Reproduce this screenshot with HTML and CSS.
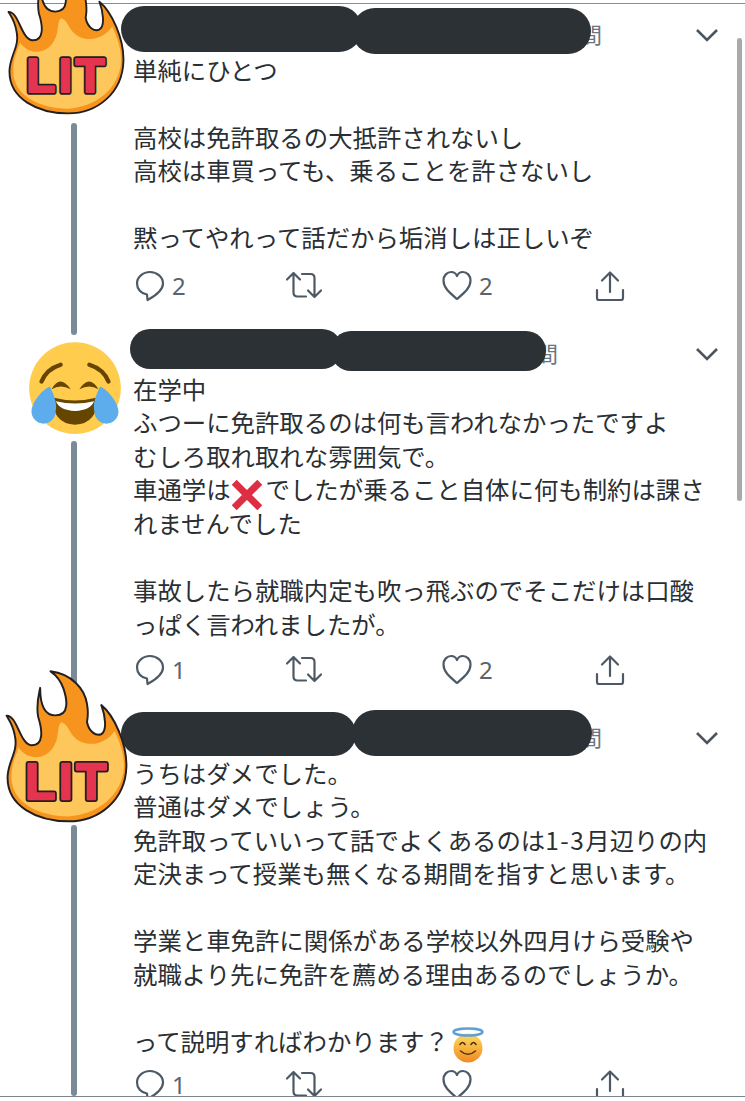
FILE: index.html
```html
<!DOCTYPE html>
<html lang="ja">
<head>
<meta charset="utf-8">
<title>Thread</title>
<link rel="stylesheet" href="styles.css">
</head>
<body>
<svg class="defs" width="0" height="0" aria-hidden="true">
  <defs>
    <symbol id="flame" viewBox="10 28 378 462" preserveAspectRatio="none">
      <path d="M150 32C215 40 255 85 262 130C268 165 262 180 262 185C268 215 290 228 305 222C325 212 318 165 306 134C345 165 385 250 383 320C380 420 300 485 205 485C110 485 15 440 18 350C20 300 52 275 40 225C35 195 22 178 15 166C48 165 55 250 90 255C130 258 125 210 112 170C105 135 113 105 118 82C118 130 130 165 165 165C210 165 200 115 190 85C182 62 165 42 150 32Z" fill="#f7941e" stroke="#231f20" stroke-width="6" stroke-linejoin="round"/>
      <path d="M52 262C80 305 150 305 170 235C175 205 175 190 183 186C208 192 205 225 240 243C280 262 325 245 347 212C365 250 378 290 375 325C370 405 295 466 205 470C115 470 30 430 30 352C30 310 42 290 52 262Z" fill="#fdc75b"/>
      <text class="lit-text lit-outline" x="72" y="418" textLength="250" lengthAdjust="spacing">LIT</text>
      <text class="lit-text lit-fill" x="72" y="418" textLength="250" lengthAdjust="spacing">LIT</text>
    </symbol>
    <symbol id="joy" viewBox="88 37 274 275">
      <circle cx="225" cy="175" r="137" fill="#ffcc4d"/>
      <path d="M125 155Q140 118 182 105M268 105Q310 118 325 155" fill="none" stroke="#664500" stroke-width="13" stroke-linecap="round"/>
      <path d="M155 178Q180 132 212 178Q182 162 155 178ZM238 178Q268 132 295 178Q268 162 238 178Z" fill="#664500"/>
      <path d="M158 203Q225 220 292 203Q292 282 225 284Q158 282 158 203Z" fill="#664500"/>
      <path d="M168 214Q225 228 282 214Q272 241 225 243Q178 241 168 214Z" fill="#fff"/>
      <path d="M150 170C165 200 172 225 167 245A36 36 0 0 1 95 245C95 220 125 180 150 170ZM300 170C285 200 278 225 283 245A36 36 0 0 0 355 245C355 220 325 180 300 170Z" fill="#5dadec"/>
    </symbol>
    <symbol id="i-comment" viewBox="0 0 30 32">
      <path d="M15 2C22 2 28 7 28 13.500C28 20 21 25.500 12.500 30L12 24.500C6 23.500 2 19 2 13.500C2 7 8 2 15 2Z"/>
    </symbol>
    <symbol id="i-retweet" viewBox="0 0 38 32">
      <path d="M2 9.500L8.500 3L15 9.500M8.500 3.500V22.500Q8.500 26.500 12.500 26.500H21M17 4H25.500Q29.500 4 29.500 8V27M23 20.500L29.500 27L36 20.500"/>
    </symbol>
    <symbol id="i-heart" viewBox="0 0 30 32">
      <path d="M15 29C8 23 1.500 18 1.500 10.500C1.500 5.500 5 2 9.200 2C12 2 14 3.500 15 6C16 3.500 18 2 20.800 2C25 2 28.500 5.500 28.500 10.500C28.500 18 22 23 15 29Z"/>
    </symbol>
    <symbol id="i-share" viewBox="0 0 30 32">
      <path d="M15 22V3M7 10.500L15 2.500L23 10.500M2 20V28Q2 30 4 30H26Q28 30 28 28V20"/>
    </symbol>
    <symbol id="i-chevron" viewBox="0 0 24 14">
      <path d="M2 2L12 12L22 2"/>
    </symbol>
  </defs>
</svg>

<main class="page">
  <div class="rule"></div>
  <div class="scrollbar"></div>

  <article class="tweet tweet-one">
    <div class="rail">
      <svg class="flame flame-one"><use href="#flame"/></svg>
      <div class="rail-slot rail-slot-one"></div>
      <div class="thread thread-overrun"></div>
    </div>
    <div class="body">
      <header class="head">
        <span class="pill pill-a1"></span><span class="pill pill-a2"></span>
        <span class="time time-long">1時間</span>
        <svg class="chevron"><use href="#i-chevron"/></svg>
      </header>
      <p class="text">単純にひとつ<br><br>高校は免許取るの大抵許されないし<br>高校は車買っても、乗ることを許さないし<br><br>黙ってやれって話だから垢消しは正しいぞ</p>
      <div class="actions actions-one">
        <div class="action"><svg class="icon"><use href="#i-comment"/></svg><span class="count">2</span></div>
        <div class="action"><svg class="icon icon-wide"><use href="#i-retweet"/></svg></div>
        <div class="action"><svg class="icon"><use href="#i-heart"/></svg><span class="count">2</span></div>
        <div class="action"><svg class="icon"><use href="#i-share"/></svg></div>
      </div>
    </div>
  </article>

  <article class="tweet tweet-two">
    <div class="rail">
      <svg class="joy"><use href="#joy"/></svg>
      <div class="thread"></div>
    </div>
    <div class="body">
      <header class="head">
        <span class="pill pill-b1"></span><span class="pill pill-b2"></span>
        <span class="time time-short">1時間</span>
        <svg class="chevron"><use href="#i-chevron"/></svg>
      </header>
      <p class="text">在学中<br>ふつーに免許取るのは何も言われなかったですよ<br>むしろ取れ取れな雰囲気で。<br>車通学は<svg class="cross" viewBox="0 0 30 30"><path d="M3 3L27 27M27 3L3 27"/></svg>でしたが乗ること自体に何も制約は課さ<br>れませんでした<br><br>事故したら就職内定も吹っ飛ぶのでそこだけは口酸<br>っぱく言われましたが。</p>
      <div class="actions actions-two">
        <div class="action"><svg class="icon"><use href="#i-comment"/></svg><span class="count">1</span></div>
        <div class="action"><svg class="icon icon-wide"><use href="#i-retweet"/></svg></div>
        <div class="action"><svg class="icon"><use href="#i-heart"/></svg><span class="count">2</span></div>
        <div class="action"><svg class="icon"><use href="#i-share"/></svg></div>
      </div>
    </div>
  </article>

  <article class="tweet tweet-three">
    <div class="rail">
      <svg class="flame flame-three"><use href="#flame"/></svg>
      <div class="rail-slot rail-slot-three"></div>
      <div class="thread"></div>
    </div>
    <div class="body">
      <header class="head">
        <span class="pill pill-c1"></span><span class="pill pill-c2"></span>
        <span class="time time-long">1時間</span>
        <svg class="chevron"><use href="#i-chevron"/></svg>
      </header>
      <p class="text">うちはダメでした。<br>普通はダメでしょう。<br>免許取っていいって話でよくあるのは<span class="digits">1-3</span>月辺りの内<br>定決まって授業も無くなる期間を指すと思います。<br><br>学業と車免許に関係がある学校以外四月けら受験や<br>就職より先に免許を薦める理由あるのでしょうか。<br><br>って説明すればわかります？<svg class="halo" viewBox="0 0 32 36">
        <defs><linearGradient id="halo-face" x1="0" y1="0" x2="0" y2="1"><stop offset="0" stop-color="#fddc5c"/><stop offset="1" stop-color="#f08a24"/></linearGradient></defs>
        <circle cx="16" cy="21" r="14.500" fill="url(#halo-face)"/>
        <ellipse cx="16" cy="5" rx="14.500" ry="3.500" fill="none" stroke="#5f9fd6" stroke-width="2.400"/>
        <path d="M8 17.500Q10.500 13.500 13 17.500M19 17.500Q21.500 13.500 24 17.500M8.500 24Q16 30.500 23.500 24" fill="none" stroke="#5b3410" stroke-width="1.600" stroke-linecap="round"/>
      </svg></p>
      <div class="actions actions-three">
        <div class="action"><svg class="icon"><use href="#i-comment"/></svg><span class="count">1</span></div>
        <div class="action"><svg class="icon icon-wide"><use href="#i-retweet"/></svg></div>
        <div class="action"><svg class="icon"><use href="#i-heart"/></svg></div>
        <div class="action"><svg class="icon"><use href="#i-share"/></svg></div>
      </div>
    </div>
  </article>

  <div class="page-foot"></div>
</main>
</body>
</html>
```

FILE: styles.css
```css
html, body {
  margin: 0;
  padding: 0;
  background: #fff;
}

.defs {
  position: absolute;
}

.page {
  position: relative;
  width: 745px;
  height: 1101px;
  overflow: hidden;
  background: #fff;
  font-family: "Noto Sans CJK JP", "Noto Sans", sans-serif;
  color: #2a2f34;
}

.rule {
  height: 1px;
  margin-top: 3px;
  background: #8c8c8c;
}

.scrollbar {
  position: absolute;
  top: 38px;
  left: 737px;
  width: 5px;
  height: 463px;
  border-radius: 3px;
  background: #a9a9a9;
}

.tweet {
  display: flex;
}

.tweet-one {
  height: 319px;
}

.tweet-two {
  height: 384px;
}

.tweet-three {
  height: 389px;
}

.rail {
  position: relative;
  flex: 0 0 133px;
  display: flex;
  flex-direction: column;
  align-items: flex-start;
}

.flame {
  position: absolute;
  z-index: 3;
  overflow: visible;
}

.flame-one {
  top: -36px;
  left: 7px;
  width: 118px;
  height: 147px;
}

.flame-three {
  top: -37px;
  left: 5px;
  width: 123px;
  height: 153px;
}

.lit-text {
  font-family: "Liberation Sans", sans-serif;
  font-weight: 700;
  font-size: 152px;
  stroke-linejoin: round;
}

.lit-outline {
  fill: #231f20;
  stroke: #231f20;
  stroke-width: 18px;
}

.lit-fill {
  fill: #e5344f;
  stroke: #e5344f;
  stroke-width: 7px;
}

.rail-slot-one {
  flex: 0 0 119px;
}

.rail-slot-three {
  flex: 0 0 118px;
}

.joy {
  flex: 0 0 92px;
  width: 92px;
  height: 92px;
  margin: 19px 0 7px 29px;
}

.thread {
  flex: 1;
  width: 6px;
  margin-left: 71px;
  border-radius: 3px;
  background: #7b8a98;
}

.thread-overrun {
  margin-bottom: -12px;
}

.body {
  flex: 1;
  min-width: 0;
}

.head {
  display: flex;
  align-items: center;
  height: 48.500px;
  padding-right: 26px;
}

.pill {
  position: relative;
  z-index: 1;
  flex: none;
  align-self: flex-start;
  border-radius: 23px;
  background: #2c3136;
}

.pill-a1 {
  width: 241px;
  height: 46px;
  margin: 2px 0 0 -12px;
}

.pill-a2 {
  width: 239px;
  height: 46px;
  margin: 4px 0 0 -10px;
}

.pill-b1 {
  width: 212px;
  height: 40px;
  margin: 6px 0 0 -3px;
}

.pill-b2 {
  width: 215px;
  height: 40px;
  margin: 8px 0 0 -11px;
}

.pill-c1 {
  width: 235px;
  height: 44px;
  margin: 5px 0 0 -12px;
}

.pill-c2 {
  width: 240px;
  height: 46px;
  margin: 3px 0 0 -4px;
}

.time {
  flex: none;
  order: -1;
  width: 0;
  white-space: nowrap;
  font-size: 22px;
  line-height: 26px;
  color: #6b7680;
  margin-top: 10px;
  direction: rtl;
}

.time-long {
  transform: translateX(469px);
}

.time-short {
  transform: translateX(425px);
}

.chevron {
  flex: none;
  width: 24px;
  height: 14px;
  margin: 14px 0 0 auto;
  fill: none;
  stroke: #4a5560;
  stroke-width: 2.600px;
}

.text {
  margin: 0;
  font-size: 24.400px;
  line-height: 33.600px;
  white-space: nowrap;
}

.digits {
  letter-spacing: 1.500px;
}

.cross {
  width: 32px;
  height: 32px;
  margin: -5px 3px -5px 0;
  vertical-align: -7px;
  fill: none;
  stroke: #dd2e44;
  stroke-width: 6.500px;
}

.halo {
  width: 32px;
  height: 36px;
  margin: -6px 0 -6px 3px;
  vertical-align: -6px;
}

.actions {
  display: grid;
  grid-template-columns: 150px 157px 153px 60px;
  padding-top: 12px;
}

.actions-one {
  padding-top: 15.500px;
}

.actions-two {
  padding-top: 13px;
}

.actions-three {
  padding-top: 11px;
}

.action {
  display: flex;
  align-items: center;
  height: 32px;
  padding-left: 2px;
}

.icon {
  width: 30px;
  height: 32px;
  fill: none;
  stroke: #4d5a66;
  stroke-width: 2.200px;
  stroke-linejoin: round;
  stroke-linecap: round;
}

.icon-wide {
  width: 38px;
}

.count {
  margin-left: 7px;
  font-family: "Noto Sans", sans-serif;
  font-size: 24px;
  line-height: 28px;
  color: #59646e;
}

.page-foot {
  position: absolute;
  left: 0;
  right: 0;
  top: 1096px;
  bottom: 0;
  z-index: 4;
  background: #fff;
  border-top: 1px solid #7b838a;
}
```
